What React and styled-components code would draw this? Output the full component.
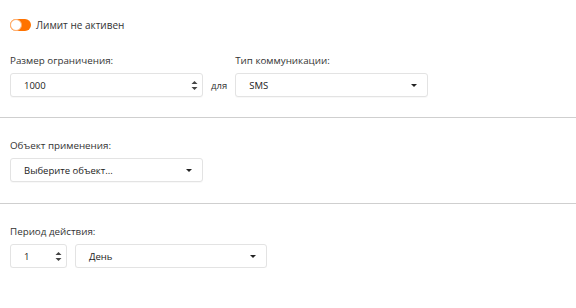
import React from "react";
import styled, { createGlobalStyle } from "styled-components";

const Global = createGlobalStyle`
  html, body { margin: 0; padding: 0; background: #fff; }
  body { font-family: "Open Sans", "Noto Sans", sans-serif; color: #333; }
`;

const Page = styled.div`
  width: 576px;
  display: flex;
  flex-direction: column;
`;

const Section = styled.div`
  padding: ${(p) => p.$pad || "0 10px"};
  display: flex;
  flex-direction: column;
`;

const ToggleRow = styled.div`
  display: flex;
  align-items: center;
  gap: 5px;
  height: 12px;
  margin-top: 19px;
  font-size: 10px;
  color: #333;
`;

const Toggle = styled.div`
  width: 21px;
  height: 12px;
  border-radius: 6px;
  background: #ff7300;
  position: relative;
  box-sizing: border-box;
`;

const Knob = styled.div`
  position: absolute;
  left: 0;
  top: 0;
  width: 12px;
  height: 12px;
  border-radius: 50%;
  background: #fff;
  box-sizing: border-box;
  border: 1px solid #ffb070;
`;

const Row = styled.div`
  display: flex;
  align-items: flex-end;
  gap: ${(p) => p.$gap || "8px"};
`;

const Field = styled.div`
  display: flex;
  flex-direction: column;
  gap: 6px;
`;

const Label = styled.div`
  font-size: 9.8px;
  line-height: 12px;
  color: #333;
`;

const Box = styled.div`
  width: ${(p) => p.$w}px;
  height: 24px;
  box-sizing: border-box;
  border: 1px solid #e3e3e3;
  border-radius: 3px;
  display: flex;
  align-items: center;
  justify-content: space-between;
  padding: 0 ${(p) => p.$pr || 10}px 0 13px;
  font-size: 9.5px;
  color: #222;
  background: #fff;
  box-shadow: 0 1px 1px rgba(0, 0, 0, 0.03);
`;

const Word = styled.div`
  font-size: 9.5px;
  height: 24px;
  display: flex;
  align-items: center;
  color: #333;
`;

const Divider = styled.div`
  height: 1px;
  background: #cfcfcf;
  width: 100%;
`;

const Spinner = () => (
  <svg width="7" height="11" viewBox="0 0 7 11">
    <path d="M3.5 1 L6.5 4 H0.5 Z" fill="#444" />
    <path d="M3.5 10 L6.5 7 H0.5 Z" fill="#444" />
  </svg>
);

const Caret = () => (
  <svg width="6" height="3" viewBox="0 0 6 3">
    <path d="M0 0 H6 L3 3 Z" fill="#222" />
  </svg>
);

export default function App() {
  return (
    <Page>
      <Global />
      <Section>
        <ToggleRow>
          <Toggle>
            <Knob />
          </Toggle>
          Лимит не активен
        </ToggleRow>
      </Section>
      <Section $pad="24px 10px 20px">
        <Row $gap="8px">
          <Field>
            <Label>Размер ограничения:</Label>
            <Box $w={193} $pr={4}>
              1000
              <Spinner />
            </Box>
          </Field>
          <Word>для</Word>
          <Field>
            <Label>Тип коммуникации:</Label>
            <Box $w={193}>
              SMS
              <Caret />
            </Box>
          </Field>
        </Row>
      </Section>
      <Divider />
      <Section $pad="22px 10px 21px">
        <Field>
          <Label>Объект применения:</Label>
          <Box $w={193}>
            Выберите объект...
            <Caret />
          </Box>
        </Field>
      </Section>
      <Divider />
      <Section $pad="22px 10px 0">
        <Field>
          <Label>Период действия:</Label>
          <Row $gap="8px">
            <Box $w={57} $pr={4}>
              1
              <Spinner />
            </Box>
            <Box $w={192}>
              День
              <Caret />
            </Box>
          </Row>
        </Field>
      </Section>
    </Page>
  );
}
